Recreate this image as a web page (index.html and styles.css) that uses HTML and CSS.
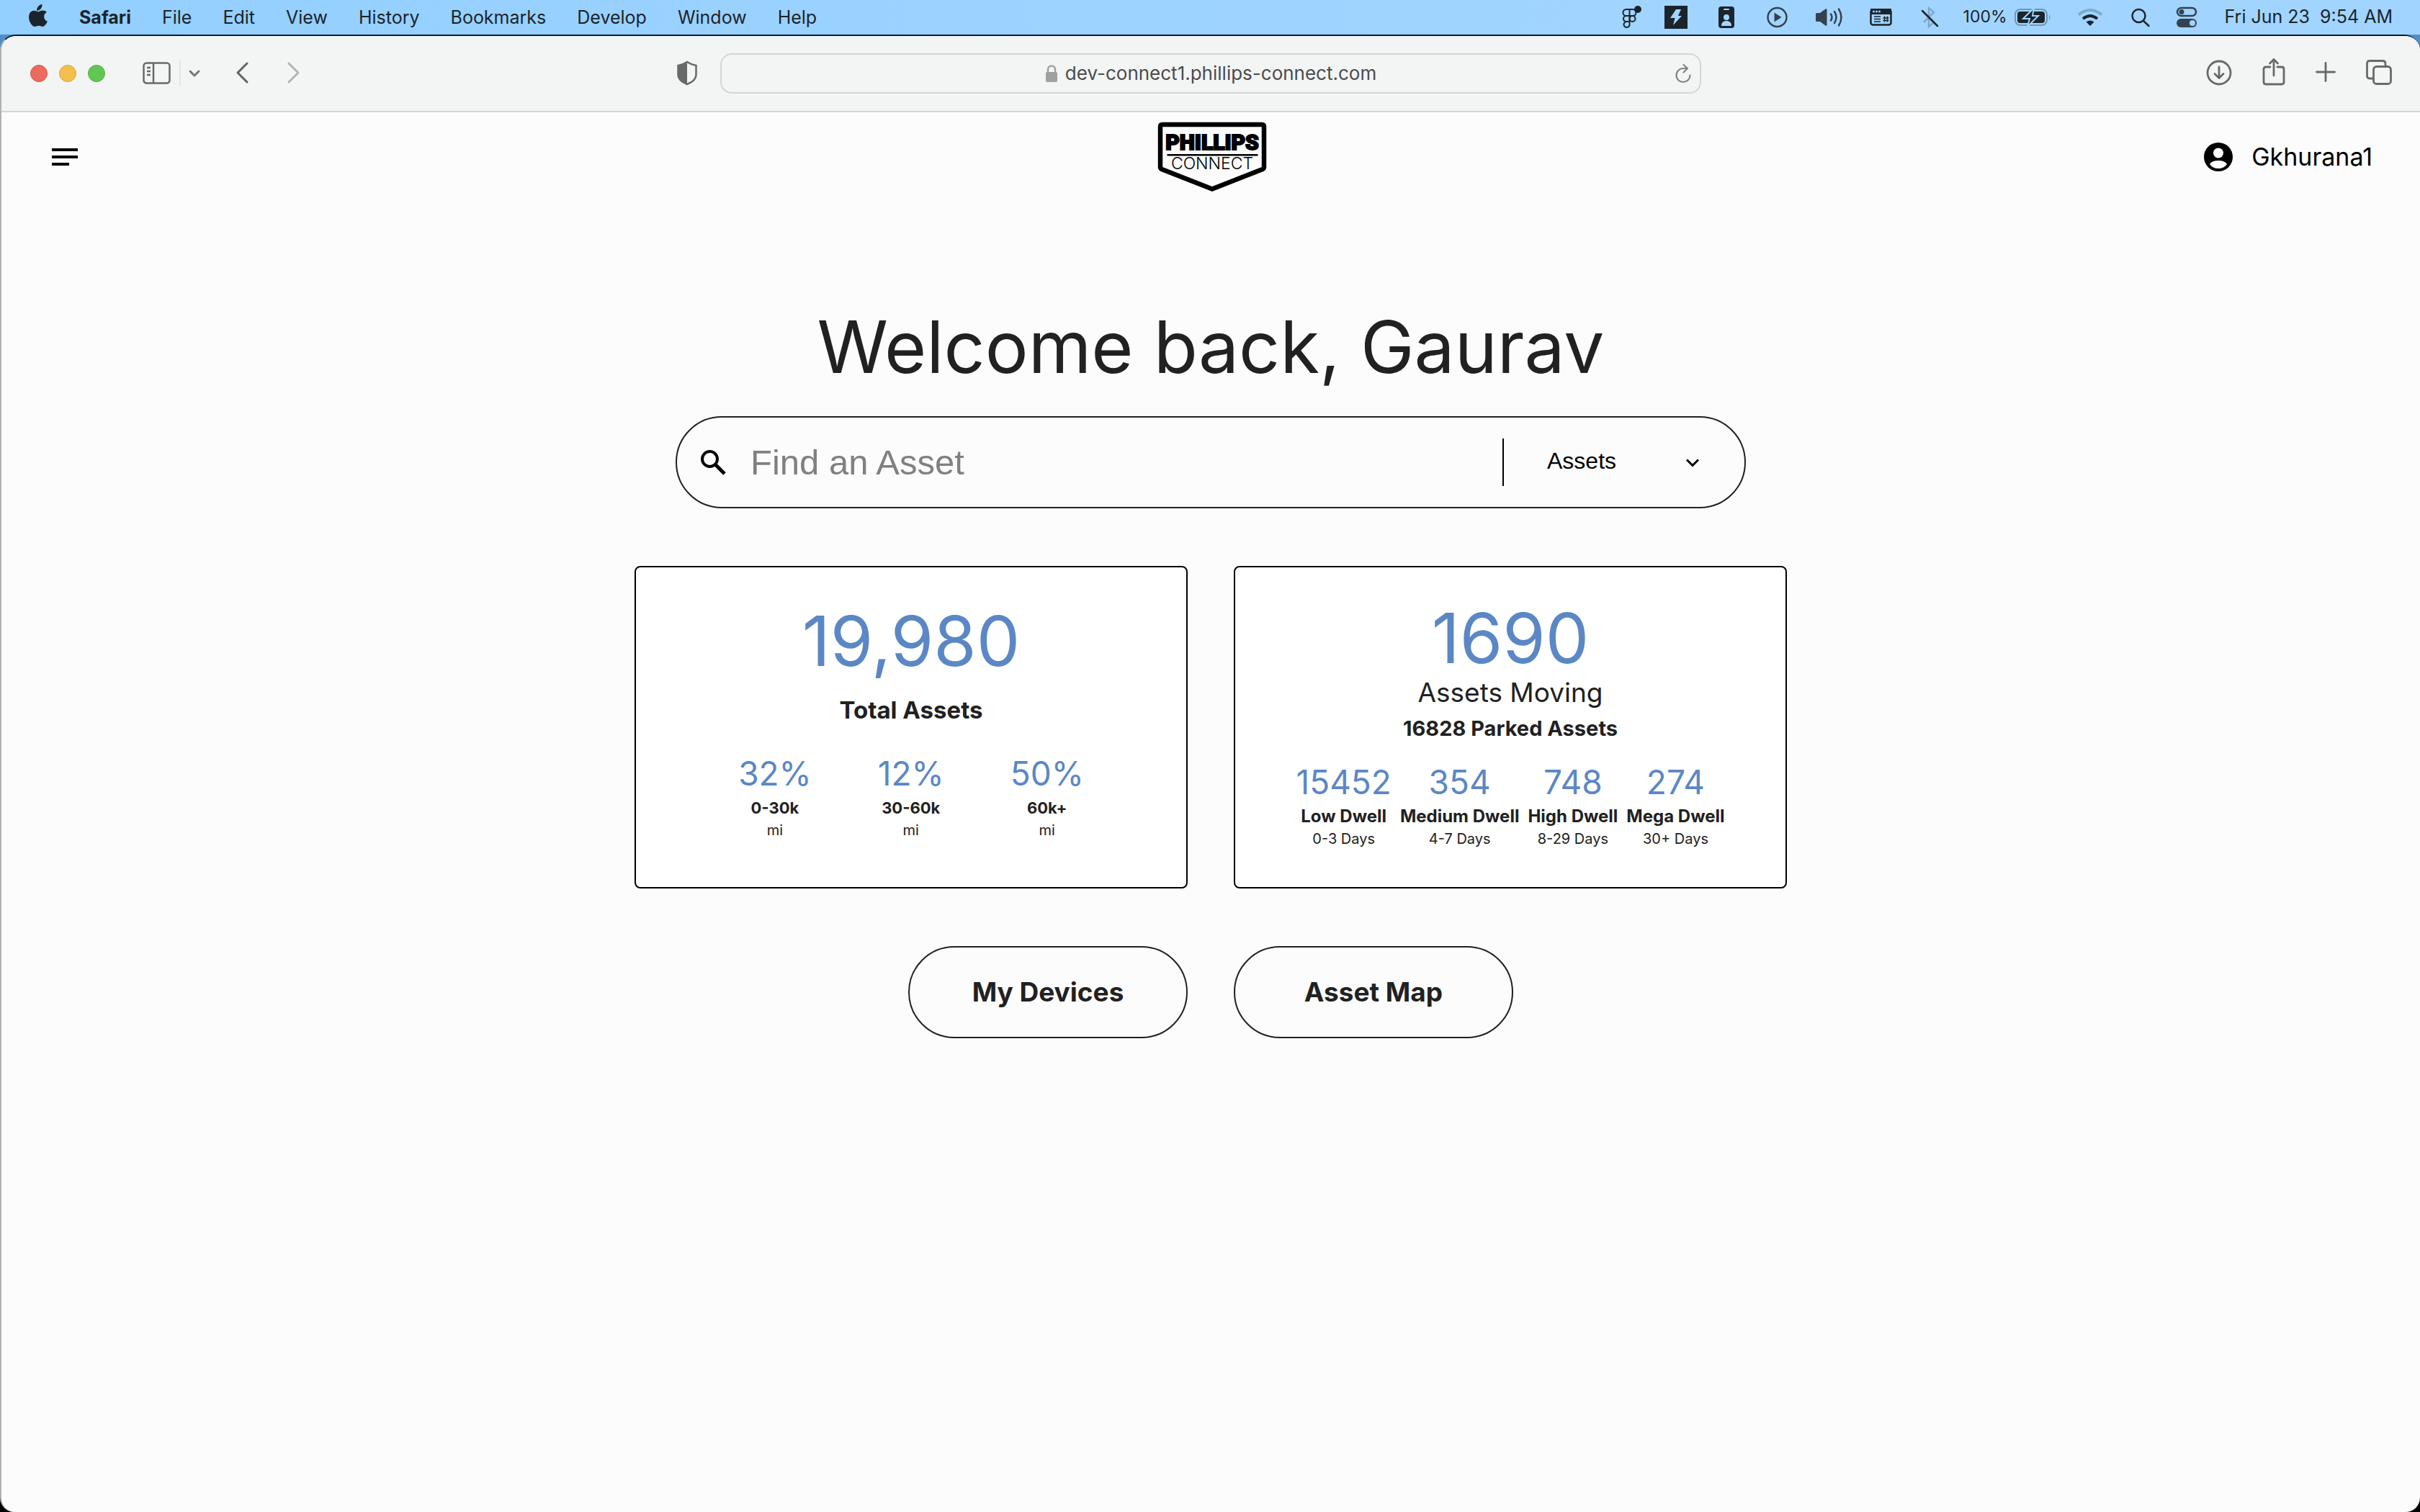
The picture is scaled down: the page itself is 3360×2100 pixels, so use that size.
FILE: index.html
```html
<!DOCTYPE html>
<html lang="en">
<head>
<meta charset="utf-8">
<meta name="viewport" content="width=device-width, initial-scale=1">
<title>Phillips Connect</title>
<link rel="stylesheet" href="styles.css">
</head>
<body>
<div class="desktop">
  <div class="menubar">
    <nav class="menus" aria-label="Application menu">
      <svg class="apple" width="28" height="48" viewBox="0 0 28 48"><path fill="#1b242c" d="M19.5 6c.3 2.400-.7 4.600-2 6.200-1.300 1.600-3.400 2.800-5.400 2.600-.3-2.300.8-4.600 2.100-6C15.600 7.200 17.800 6.100 19.500 6zM25.800 17c-2.400 1.500-3.700 3.500-3.600 6.300 0 3.200 1.800 5.400 4.600 6.500-.8 2.600-4 7.200-6.800 7.200-2 0-2.900-1.200-5.300-1.200S11.200 37 9.300 37C5.600 37 1 30 1 23.800c0-5.800 3.700-9 7.300-9 2.400 0 4.300 1.500 5.800 1.500 1.400 0 3.600-1.700 6.400-1.700 2 0 4 .8 5.300 2.400z"/></svg>
      <button type="button" class="menu menu-app">Safari</button>
      <button type="button" class="menu">File</button>
      <button type="button" class="menu">Edit</button>
      <button type="button" class="menu">View</button>
      <button type="button" class="menu">History</button>
      <button type="button" class="menu">Bookmarks</button>
      <button type="button" class="menu">Develop</button>
      <button type="button" class="menu">Window</button>
      <button type="button" class="menu">Help</button>
    </nav>
    <div class="status">
      <svg width="30" height="48" viewBox="0 0 30 48"><g fill="none" stroke="#1b242c" stroke-width="2"><path d="M15.500 13H11a4.500 4.500 0 0 0 0 9h4.500zM15.500 13H20a4.500 4.500 0 0 1 0 9h-4.500zM15.500 22H11a4 4 0 0 0 0 8h4.500zM15.500 22v11.500a4 4 0 1 1-4-3.500"/><circle cx="19.500" cy="26" r="4"/></g><circle cx="27" cy="13" r="5" fill="#1b242c"/></svg>
      <svg width="32" height="48" viewBox="0 0 32 48"><path fill="#1b242c" d="M0 8h32v32H0z"/><path fill="#a1d5ff" d="M16 13h7l-4 9h5L12 35l2.500-10H8z"/></svg>
      <svg width="40" height="48" viewBox="0 0 40 48"><rect x="9" y="9" width="22" height="30" rx="4" fill="#1b242c"/><g fill="#a1d5ff"><rect x="16" y="12" width="8" height="2" rx="1"/><circle cx="20" cy="24" r="4"/><path d="M13 36c0-5 3-7 7-7s7 2 7 7z"/></g></svg>
      <svg width="35" height="48" viewBox="0 0 35 48"><circle cx="16.500" cy="24" r="13" fill="none" stroke="#34424f" stroke-width="2.500"/><path fill="#34424f" d="M12.500 17.500l10 6.500-10 6.500z"/></svg>
      <svg width="40" height="48" viewBox="0 0 40 48"><path fill="#34424f" d="M1 19.500q0-1.500 1.500-1.500H7l7.500-5.500q2-1 2 1v21q0 2-2 1L7 30H2.500Q1 30 1 28.500z"/><g fill="none" stroke="#34424f" stroke-width="2.500" stroke-linecap="round"><path d="M22 19.500q3 4.500 0 9M27 16q5 8 0 16M33 12.500q7 11.500 0 23"/></g></svg>
      <svg width="38" height="48" viewBox="0 0 38 48"><rect x="3.500" y="13.500" width="28" height="21" rx="3" fill="none" stroke="#1b242c" stroke-width="2.500"/><path fill="#1b242c" d="M3 12h29v8H3z"/><g fill="#a1d5ff"><circle cx="7.500" cy="16" r="1.500"/><circle cx="11.500" cy="16" r="1.500"/><circle cx="15.500" cy="16" r="1.500"/></g><path d="M8 23h9M8 26.500h9M8 30h9" stroke="#1b242c" stroke-width="1.500"/><path d="M22.500 22.500v8M26.500 22.500v8M20.500 25h8M20.500 28.500h8" stroke="#1b242c" stroke-width="1.500"/></svg>
      <svg width="26" height="48" viewBox="0 0 26 48"><path d="M5 31l14-14-7-6v26l7-6-5-5" fill="none" stroke="#7fa9cc" stroke-width="2.500"/><path d="M3 15l21 21" stroke="#1b242c" stroke-width="2.500" stroke-linecap="round"/></svg>
      <div class="battery">
        <span>100%</span>
        <svg width="51" height="48" viewBox="0 0 51 48"><rect x="1" y="13" width="44" height="22" rx="7" fill="none" stroke="#6f96b6" stroke-width="2"/><path d="M48 20q3 4 0 8z" fill="#6f96b6"/><rect x="4" y="16" width="38" height="16" rx="4" fill="#1b242c"/><path d="M27 11L12 26h9l-3 11 15-15h-8z" fill="#1b242c" stroke="#a1d5ff" stroke-width="2"/></svg>
      </div>
      <svg width="40" height="48" viewBox="0 0 40 48"><g fill="none" stroke-width="4"><path d="M4 20.500q16-13 32 0" stroke="#7fa9cc"/><path d="M10 26q10-8 20 0" stroke="#1b242c"/></g><path d="M14.500 30.500q5.500-4 11 0L20 36z" fill="#1b242c"/></svg>
      <svg width="30" height="48" viewBox="0 0 30 48"><g fill="none" stroke="#1b242c" stroke-width="2.500" stroke-linecap="round"><circle cx="13.500" cy="22" r="9"/><path d="M20 29l7.500 7"/></g></svg>
      <svg width="31" height="48" viewBox="0 0 31 48"><rect x="3" y="11" width="26" height="11" rx="5.500" fill="none" stroke="#34424f" stroke-width="2.500"/><circle cx="9" cy="16.500" r="3.500" fill="#34424f"/><rect x="2" y="26" width="28" height="12" rx="6" fill="#34424f"/><circle cx="24" cy="32" r="4" fill="#a1d5ff"/></svg>
      <time class="clock">Fri Jun 23&nbsp; 9:54 AM</time>
    </div>
  </div>

  <div class="window">
    <div class="toolbar">
      <div class="tools-left">
        <div class="lights">
          <button type="button" class="light light-close" aria-label="Close"></button>
          <button type="button" class="light light-min" aria-label="Minimise"></button>
          <button type="button" class="light light-zoom" aria-label="Zoom"></button>
        </div>
        <div class="sidebar-group">
          <button type="button" class="icon-button" aria-label="Sidebar"><svg width="40" height="36" viewBox="0 0 40 36"><g fill="none" stroke="#686a69" stroke-width="2.500"><rect x="1.500" y="3.500" width="36" height="28" rx="4"/><path d="M15 3v29M6 10h5M6 15h5M6 20h5"/></g></svg></button>
          <span class="tool-divider"></span>
          <button type="button" class="icon-button" aria-label="Tab groups"><svg width="16" height="36" viewBox="0 0 16 36"><path d="M2 15l6 6 6-6" fill="none" stroke="#747675" stroke-width="3" stroke-linecap="round" stroke-linejoin="round"/></svg></button>
        </div>
        <div class="history">
          <button type="button" class="icon-button" aria-label="Back"><svg width="20" height="36" viewBox="0 0 20 36"><path d="M17 4L4 17l13 13" fill="none" stroke="#626463" stroke-width="3" stroke-linecap="round" stroke-linejoin="round"/></svg></button>
          <button type="button" class="icon-button" aria-label="Forward"><svg width="20" height="36" viewBox="0 0 20 36"><path d="M3 4l13 13L3 30" fill="none" stroke="#b2b4b3" stroke-width="3" stroke-linecap="round" stroke-linejoin="round"/></svg></button>
        </div>
        <button type="button" class="icon-button privacy" aria-label="Privacy report"><svg width="28" height="36" viewBox="0 0 28 36"><path d="M14 2q6 4 12.500 5v13q0 8-12.500 13Q1.500 28 1.500 20V7Q8 6 14 2z" fill="none" stroke="#686a69" stroke-width="2.500"/><path d="M14 2v31Q1.500 28 1.500 20V7Q8 6 14 2z" fill="#686a69"/></svg></button>
      </div>
      <div class="address">
        <svg width="18" height="26" viewBox="0 0 18 26"><rect x="1" y="11" width="16" height="14" rx="2" fill="#9fa1a0"/><path d="M4 12V7.500a5 5 0 0 1 10 0V12" fill="none" stroke="#9fa1a0" stroke-width="2.500"/></svg>
        <input class="url" type="text" aria-label="Address" value="dev-connect1.phillips-connect.com">
        <button type="button" class="icon-button reload" aria-label="Reload"><svg width="24" height="30" viewBox="0 0 24 30"><path d="M20.500 17.500a9.500 9.500 0 1 1-9.500-9.500h6M11.500 3l5.500 5-5.500 5.500" fill="none" stroke="#818382" stroke-width="2.200" stroke-linecap="round" stroke-linejoin="round"/></svg></button>
      </div>
      <div class="tools-right">
        <button type="button" class="icon-button" aria-label="Downloads"><svg width="36" height="40" viewBox="0 0 36 40"><g fill="none" stroke="#686a69" stroke-width="2.800" stroke-linecap="round" stroke-linejoin="round"><circle cx="18" cy="19" r="16"/><path d="M18 11v15M12 20.500l6 6 6-6"/></g></svg></button>
        <button type="button" class="icon-button" aria-label="Share"><svg width="32" height="40" viewBox="0 0 32 40"><g fill="none" stroke="#686a69" stroke-width="2.800" stroke-linecap="round" stroke-linejoin="round"><path d="M11 11H5q-3 0-3 3v18q0 3 3 3h22q3 0 3-3V14q0-3-3-3h-6M16 23V.5M10.500 6L16 .5 21.500 6"/></g></svg></button>
        <button type="button" class="icon-button" aria-label="New tab"><svg width="28" height="40" viewBox="0 0 28 40"><path d="M1.500 18h25M14 5.500v25" stroke="#686a69" stroke-width="2.800" stroke-linecap="round"/></svg></button>
        <button type="button" class="icon-button" aria-label="Show tabs"><svg width="36" height="40" viewBox="0 0 36 40"><g fill="none" stroke="#686a69" stroke-width="2.800"><rect x="10.500" y="10.500" width="24" height="24" rx="4"/><path d="M10 27H5q-3.500 0-3.500-3.500v-17Q1.500 2.500 5 2.500h18q4 0 4 4v4"/></g></svg></button>
      </div>
    </div>

    <header class="site-header">
      <button type="button" class="icon-button burger" aria-label="Open menu"><svg width="36" height="24" viewBox="0 0 36 24"><path d="M0 0h36v4H0zM0 10h36v4H0zM0 20h24v4H0z"/></svg></button>
      <a class="logo" href="#" aria-label="Phillips Connect home">
        <svg width="150" height="96" viewBox="0 0 150 96">
          <path d="M6 3h138q3 0 3 3v56q0 2-2 3L75 92.500 5 65q-2-1-2-3V6q0-3 3-3z" fill="none" stroke="#000" stroke-width="6.500"/>
          <text class="logo-top" x="75" y="38" text-anchor="middle">PHILLIPS</text>
          <path d="M12.500 44h126v2.500h-126z"/>
          <text class="logo-bottom" x="75" y="65" text-anchor="middle">CONNECT</text>
        </svg>
      </a>
      <button type="button" class="user">
        <svg width="40" height="40" viewBox="0 0 40 40"><circle cx="20" cy="20" r="20"/><circle cx="20" cy="14.500" r="7" fill="#fcfcfc"/><path d="M8 30q3-5 12-5t12 5q-4 6-12 6T8 30z" fill="#fcfcfc"/></svg>
        <span>Gkhurana1</span>
      </button>
    </header>

    <main class="home">
      <h1 class="welcome">Welcome back, Gaurav</h1>
      <form class="search">
        <label class="search-icon" for="asset-query" aria-label="Find an asset"><svg width="36" height="36" viewBox="0 0 36 36"><g fill="none" stroke="#000" stroke-width="4"><circle cx="13.500" cy="13.500" r="10.500"/><path d="M21 21l13 13" stroke-width="5"/></g></svg></label>
        <input id="asset-query" class="search-input" type="text" placeholder="Find an Asset">
        <div class="search-scope">
          <select class="scope-select" aria-label="Search in"><option>Assets</option></select>
          <svg width="20" height="14" viewBox="0 0 20 14"><path d="M2 3.500l8 8 8-8" fill="none" stroke="#000" stroke-width="3"/></svg>
        </div>
      </form>
      <div class="cards">
        <section class="card card-total">
          <p class="figure">19,980</p>
          <h2 class="caption">Total Assets</h2>
          <ul class="stats stats-mileage">
            <li class="stat"><span class="value">32%</span><b class="name">0-30k</b><span class="unit">mi</span></li>
            <li class="stat"><span class="value">12%</span><b class="name">30-60k</b><span class="unit">mi</span></li>
            <li class="stat"><span class="value">50%</span><b class="name">60k+</b><span class="unit">mi</span></li>
          </ul>
        </section>
        <section class="card card-moving">
          <p class="figure">1690</p>
          <h2 class="subtitle">Assets Moving</h2>
          <p class="parked">16828 Parked Assets</p>
          <ul class="stats stats-dwell">
            <li class="stat"><span class="value">15452</span><b class="name">Low Dwell</b><span class="unit">0-3 Days</span></li>
            <li class="stat"><span class="value">354</span><b class="name">Medium Dwell</b><span class="unit">4-7 Days</span></li>
            <li class="stat"><span class="value">748</span><b class="name">High Dwell</b><span class="unit">8-29 Days</span></li>
            <li class="stat"><span class="value">274</span><b class="name">Mega Dwell</b><span class="unit">30+ Days</span></li>
          </ul>
        </section>
      </div>
      <div class="actions">
        <button type="button" class="pill">My Devices</button>
        <button type="button" class="pill">Asset Map</button>
      </div>
    </main>
  </div>
</div>
</body>
</html>
```
FILE: styles.css
```css
* { box-sizing: border-box; }

body {
  margin: 0;
  background: #000;
  color: #212121;
  font-family: Inter, "Liberation Sans", sans-serif;
}

h1, h2, p, ul { margin: 0; padding: 0; }
ul { list-style: none; }
svg { display: block; flex: none; overflow: visible; }

button {
  padding: 0;
  border: 0;
  background: none;
  color: inherit;
  font: inherit;
}

.desktop {
  display: flex;
  flex-direction: column;
  min-height: 100vh;
  background: linear-gradient(#4f8fc9 0, #4f8fc9 120px, #000 240px);
}

/* System menu bar */
.menubar {
  display: flex;
  justify-content: space-between;
  align-items: center;
  height: 48px;
  padding: 0 38px 0 39px;
  background: linear-gradient(90deg, #93cfff, #a1d5ff 70%);
  color: #1b242c;
  font-size: 25px;
  line-height: 46px;
}
.menus { display: flex; gap: 43px; }
.menu-app { font-weight: 700; }
.status { display: flex; gap: 34px; white-space: nowrap; }
.battery { display: flex; gap: 10px; font-size: 23px; }
.clock { margin-left: 4px; }

/* Browser window */
.window {
  flex: 1;
  border-top: 2px solid #0c1a26;
  border-left: 2px solid #b0b2b2;
  border-radius: 22px 22px 20px 20px;
  background: #fcfcfc;
}
.toolbar {
  display: grid;
  grid-template-columns: 1fr minmax(0, 1362px) 1fr;
  align-items: center;
  height: 106px;
  border-bottom: 2px solid #d3d5d4;
  border-radius: 20px 20px 0 0;
  background: #f3f5f4;
}
.tools-left {
  display: flex;
  align-items: center;
  padding: 0 32px 0 40px;
}
.lights { display: flex; gap: 16px; margin-right: 52px; }
.light {
  width: 24px;
  height: 24px;
  border: 1px solid;
  border-radius: 50%;
}
.light-close { background: #ed6a5f; border-color: #d9574c; }
.light-min { background: #f5bf4f; border-color: #dca63c; }
.light-zoom { background: #62c655; border-color: #50b043; }
.sidebar-group { display: flex; align-items: center; gap: 11px; }
.tool-divider { width: 2px; height: 36px; background: #e4e6e5; }
.history { display: flex; gap: 52px; margin-left: 48px; }
.privacy { margin-left: auto; }
.address {
  display: flex;
  justify-content: center;
  align-items: center;
  gap: 10px;
  position: relative;
  height: 56px;
  border: 2px solid #d3d6d5;
  border-radius: 16px;
}
.url {
  field-sizing: content;
  padding: 0;
  border: 0;
  background: none;
  color: #4a4c4b;
  font: 26px/36px Inter, "Liberation Sans", sans-serif;
}
.reload { position: absolute; right: 10px; }
.tools-right {
  display: flex;
  justify-content: flex-end;
  gap: 42px;
  padding-right: 39px;
}

/* Site header */
.site-header {
  display: grid;
  grid-template-columns: 1fr auto 1fr;
  align-items: center;
  padding: 14px 66px 0 70px;
}
.burger { justify-self: start; }
.logo { color: #000; }
.logo-top { font: 900 30px Roboto, sans-serif; stroke: #000; stroke-width: 2px; }
.logo-bottom { font: 300 23px Inter, sans-serif; }
.user {
  display: flex;
  align-items: center;
  justify-self: end;
  gap: 26px;
  color: #000;
  font-size: 34px;
  line-height: 40px;
}

/* Landing page */
.home {
  display: flex;
  flex-direction: column;
  align-items: center;
  padding: 156px 32px 64px;
}
.welcome { font-size: 100px; line-height: 120px; font-weight: 400; }
.search {
  display: flex;
  align-items: center;
  width: 100%;
  max-width: 1486px;
  height: 128px;
  margin-top: 36px;
  padding: 0 62px 0 32px;
  border: 2px solid #212121;
  border-radius: 64px;
}
.search-input {
  flex: 1;
  min-width: 0;
  margin-left: 34px;
  padding: 0;
  border: 0;
  background: none;
  font: 49px/56px "Liberation Sans", sans-serif;
}
.search-input::placeholder { color: #808080; }
.search-scope {
  display: flex;
  align-items: center;
  height: 66px;
  padding-left: 60px;
  border-left: 2px solid #000;
}
.scope-select {
  width: 192px;
  padding: 0 0 4px;
  appearance: none;
  border: 0;
  background: none;
  color: #000;
  font: 32px/40px "Liberation Sans", sans-serif;
}
.cards, .actions {
  display: flex;
  flex-wrap: wrap;
  justify-content: center;
  gap: 64px;
  width: 100%;
  margin-top: 80px;
}
.card {
  display: flex;
  flex-direction: column;
  align-items: center;
  flex: 0 1 768px;
  min-height: 448px;
  border: 2px solid #000;
  border-radius: 8px;
  background: #fff;
}
.card-total { padding-top: 46px; }
.card-moving { padding-top: 42px; }
.figure { color: #5b87c5; font-size: 96px; line-height: 112px; font-weight: 400; }
.caption { margin-top: 20px; font-size: 33px; line-height: 40px; font-weight: 700; }
.subtitle { font-size: 37px; line-height: 40px; font-weight: 400; }
.parked { margin-top: 10px; font-size: 29px; line-height: 40px; font-weight: 700; }
.stats { display: flex; }
.stats-mileage { gap: 92px; margin-top: 36px; }
.stats-dwell { gap: 12px; margin-top: 22px; }
.stat { display: flex; flex-direction: column; align-items: center; }
.value { color: #5b87c5; font-size: 46px; line-height: 64px; font-weight: 400; }
.name { font-size: 22px; line-height: 32px; font-weight: 700; }
.stats-dwell .name { font-size: 24px; }
.unit { font-size: 20px; line-height: 30px; }
.pill {
  width: 388px;
  height: 128px;
  padding-bottom: 2px;
  border: 2px solid #212121;
  border-radius: 64px;
  font-size: 37px;
  font-weight: 700;
}
```
